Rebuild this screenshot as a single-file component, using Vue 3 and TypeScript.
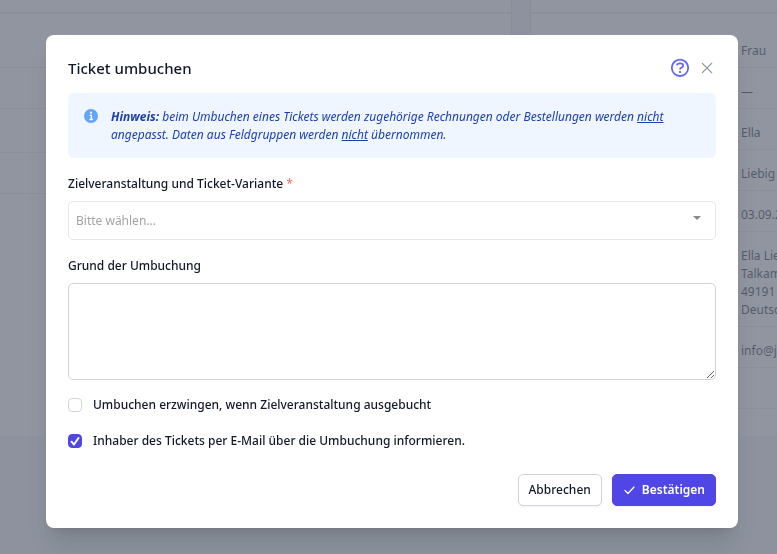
<script setup lang="ts">
import { ref } from 'vue'

const details: string[][] = [
  ['Frau'],
  ['—'],
  ['Ella'],
  ['Liebig'],
  ['03.09.2'],
  ['Ella Lie', 'Talkam', '49191', 'Deutsc'],
  ['info@j'],
  [''],
]

const variant = ref('')
const reason = ref('')
const force = ref(false)
const inform = ref(true)
</script>

<template>
  <div class="page">
    <section class="panel">
      <div class="panel-head"></div>
      <div class="row"></div>
      <div class="row"></div>
      <div class="row tall"></div>
      <div class="row"></div>
    </section>
    <section class="panel">
      <div class="panel-head"></div>
      <div v-for="(lines, i) in details" :key="i" class="row value">
        <span v-for="line in lines" :key="line">{{ line }}</span>
      </div>
    </section>
  </div>

  <div class="overlay">
    <form class="modal" role="dialog" aria-labelledby="dialog-title" @submit.prevent>
      <header class="head">
        <h2 id="dialog-title">Ticket umbuchen</h2>
        <button type="button" class="icon-button">
          <svg width="20" height="20" viewBox="0 0 20 20" fill="none" stroke="#6366f1" stroke-width="1.8">
            <circle cx="10" cy="9.800" r="8.2" />
            <path d="M6.900 7.300C7.200 6 8.500 5.400 10 5.400c1.800 0 3.100.9 3.100 2.300 0 1.900-3.100 1.900-3.100 3.800" />
            <path d="M10 13v2" />
          </svg>
        </button>
        <button type="button" class="icon-button">
          <svg width="14" height="14" viewBox="0 0 14 14" fill="none" stroke="#8b919e" stroke-width="1.2" stroke-linecap="round">
            <path d="M2.300 2.300l9.400 9.400M11.700 2.300l-9.400 9.400" />
          </svg>
        </button>
      </header>

      <div class="notice">
        <svg width="14" height="14" viewBox="0 0 14 14">
          <circle cx="7" cy="7" r="7" fill="#60a5fa" />
          <circle cx="7" cy="3.700" r="1.100" fill="#fff" />
          <path d="M5.500 6.300H7.400V10.400M5.400 10.500H8.900" fill="none" stroke="#fff" stroke-width="1.300" />
        </svg>
        <p>
          <strong>Hinweis:</strong> beim Umbuchen eines Tickets werden zugehörige Rechnungen oder Bestellungen werden
          <u>nicht</u> angepasst. Daten aus Feldgruppen werden <u>nicht</u> übernommen.
        </p>
      </div>

      <div class="field">
        <label for="variant">Zielveranstaltung und Ticket-Variante <span class="required">*</span></label>
        <div class="select">
          <select id="variant" v-model="variant" required>
            <option value="">Bitte wählen...</option>
          </select>
          <svg class="caret" width="8" height="4" viewBox="0 0 8 4"><path d="M0 0h8L4 4z" fill="#888" /></svg>
        </div>
      </div>

      <div class="field">
        <label for="reason">Grund der Umbuchung</label>
        <textarea id="reason" v-model="reason"></textarea>
      </div>

      <div class="checks">
        <label><input v-model="force" type="checkbox" />Umbuchen erzwingen, wenn Zielveranstaltung ausgebucht</label>
        <label><input v-model="inform" type="checkbox" />Inhaber des Tickets per E-Mail über die Umbuchung informieren.</label>
      </div>

      <footer class="actions">
        <button type="button" class="button">Abbrechen</button>
        <button type="submit" class="button primary">
          <svg width="12" height="12" viewBox="0 0 12 12" fill="none" stroke="#fff" stroke-width="1.2" stroke-linecap="round" stroke-linejoin="round">
            <path d="M2 6.500l3 3 6-6.500" />
          </svg>
          Bestätigen
        </button>
      </footer>
    </form>
  </div>
</template>

<style>
body {
  background: #f3f4f6;
  overflow: hidden;
}
</style>

<style scoped>
* {
  box-sizing: border-box;
}

.page,
.overlay {
  font-family: 'Noto Sans', sans-serif;
  font-size: 12px;
  line-height: 18px;
  color: #111827;
}

.page {
  display: grid;
  grid-template-columns: 511px minmax(0, 1fr);
  gap: 20px;
}

.panel {
  min-height: 436px;
  background: #fff;
  box-shadow: 0 1px 2px rgba(0, 0, 0, 0.2);
}

.panel-head {
  height: 14px;
  border-bottom: 2px solid #e5e7eb;
}

.row {
  display: flex;
  flex-direction: column;
  min-height: 41px;
  padding: 15px 0 7px;
  border-bottom: 1px solid #e5e7eb;
}

.row.tall {
  min-height: 44px;
}

.panel-head + .row {
  padding-top: 28px;
  min-height: 54px;
}

.value {
  padding-left: 210px;
  white-space: nowrap;
}

.overlay {
  position: fixed;
  inset: 0;
  padding: 35px 39px 26px 46px;
  background: rgba(107, 114, 128, 0.75);
}

.modal {
  display: flex;
  flex-direction: column;
  padding: 22px;
  background: #fff;
  border-radius: 8px;
  box-shadow: 0 20px 25px -5px rgba(0, 0, 0, 0.12), 0 8px 10px -6px rgba(0, 0, 0, 0.1);
}

.head {
  display: flex;
  align-items: center;
  gap: 10px;
  height: 22px;
}

h2 {
  flex: 1;
  margin: 0;
  font-size: 15px;
  line-height: 22px;
  font-weight: 500;
}

.icon-button {
  display: flex;
  padding: 0;
  border: 0;
  background: none;
}

.icon-button:last-child {
  margin-right: 2px;
}

.notice {
  display: flex;
  gap: 13px;
  margin-top: 14px;
  padding: 15px 16px 14px;
  background: #eff6ff;
  border-radius: 6px;
  color: #1e40af;
  font-style: italic;
}

.notice svg {
  flex: none;
  margin-top: 1px;
}

.notice p {
  flex: 1;
  margin: 0;
}

.field {
  display: flex;
  flex-direction: column;
  gap: 8px;
  margin-top: 17px;
}

label {
  font-weight: 500;
}

.required {
  color: #f87171;
}

.select {
  position: relative;
  display: grid;
}

select,
textarea {
  width: 100%;
  font: inherit;
  background: #fff;
  border-radius: 5px;
}

select {
  appearance: none;
  height: 39px;
  padding: 0 7px;
  border: 1px solid #e5e7eb;
  color: #a3a3a3;
}

.caret {
  position: absolute;
  right: 15px;
  top: 15px;
  pointer-events: none;
}

textarea {
  display: block;
  height: 97px;
  padding: 8px;
  border: 1px solid #d1d5db;
}

.checks {
  display: flex;
  flex-direction: column;
  gap: 18px;
  margin-top: 16px;
}

.checks label {
  display: flex;
  align-items: center;
  gap: 11px;
}

input {
  appearance: none;
  flex: none;
  width: 14px;
  height: 14px;
  margin: 0;
  border: 1px solid #d1d5db;
  border-radius: 4px;
}

input:checked {
  border-color: #4f46e5;
  background: #4f46e5 url("data:image/svg+xml,%3Csvg xmlns='http://www.w3.org/2000/svg' viewBox='0 0 14 14'%3E%3Cpath d='M3.500 7.700l2.500 2.800 4.500-6.500' fill='none' stroke='white' stroke-width='2' stroke-linecap='round' stroke-linejoin='round'/%3E%3C/svg%3E") center / 14px 14px;
}

.actions {
  display: flex;
  justify-content: flex-end;
  gap: 10px;
  margin-top: 24px;
}

.button {
  display: flex;
  align-items: center;
  gap: 7px;
  height: 32px;
  padding: 0 10px;
  border: 1px solid #d1d5db;
  border-radius: 5px;
  background: #fff;
  box-shadow: 0 1px 2px rgba(0, 0, 0, 0.05);
  color: #111827;
  font: inherit;
  font-weight: 500;
}

.primary {
  border-color: #4f46e5;
  background: #4f46e5;
  color: #fff;
  font-weight: 600;
}
</style>
